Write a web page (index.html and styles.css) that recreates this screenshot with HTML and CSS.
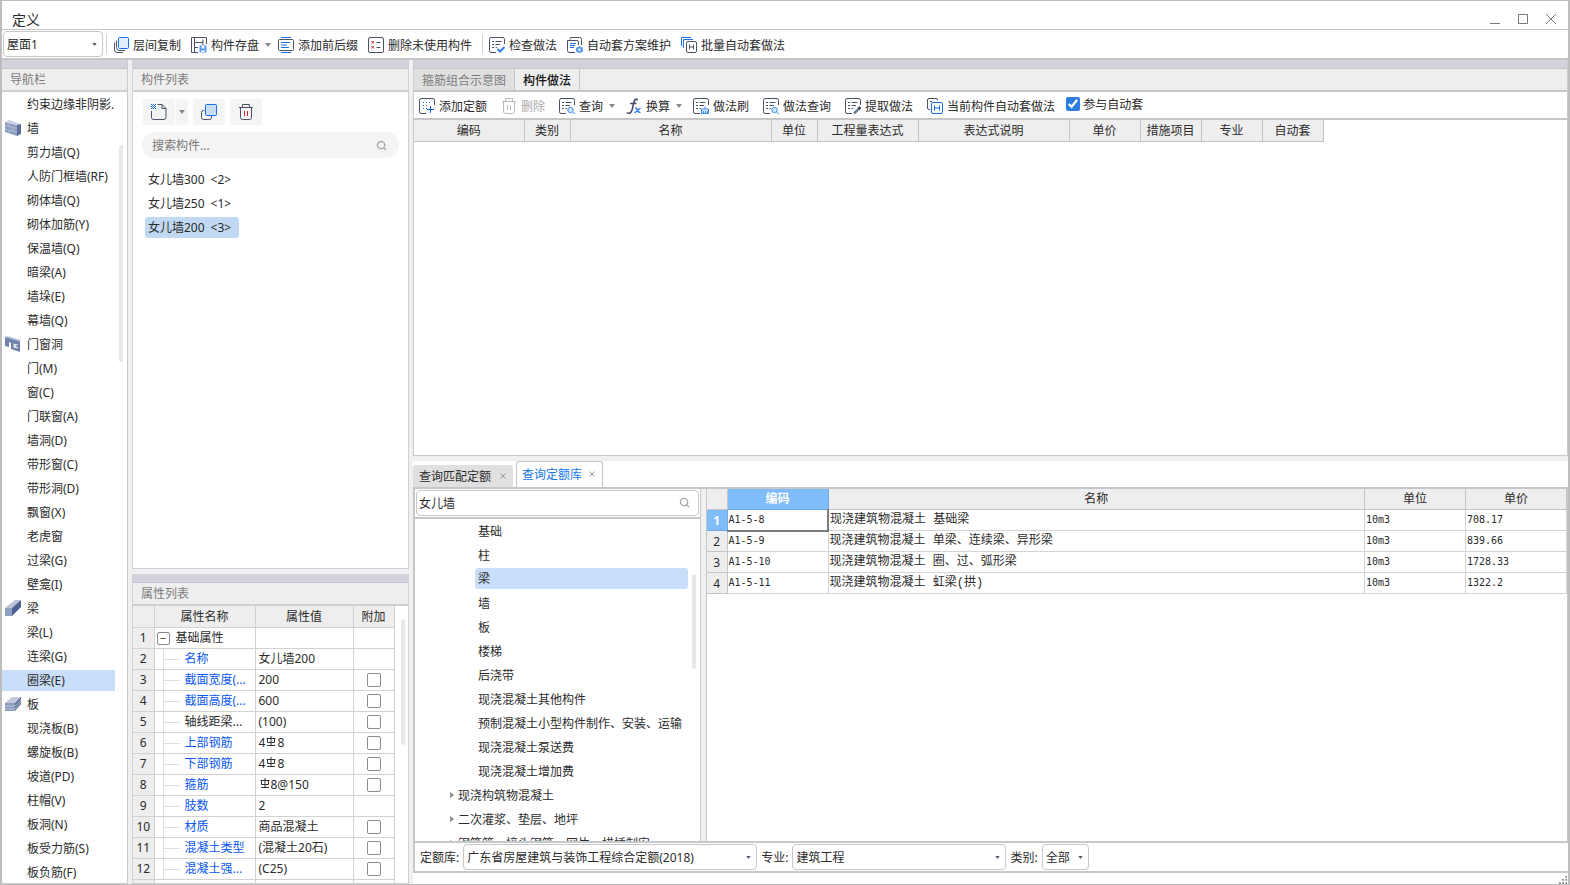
FILE: index.html
```html
<!DOCTYPE html>
<html lang="zh-CN">
<head>
<meta charset="utf-8">
<title>定义</title>
<link rel="stylesheet" href="styles.css">
</head>
<body>
<svg class="defs" aria-hidden="true">
  <defs>
    <symbol id="i-list" viewBox="0 0 16 16"><path d="M15.500 7V2.500Q15.500 .500 14 .500H2Q.500 .500 .500 2.500V13.500Q.500 15.500 2 15.500H7" class="d"/><path d="M3 4.500H5M6.500 4.500H12.500M3 7.500H5M6.500 7.500H11M3 10.500H5M6.500 10.500H8" class="d"/></symbol>
  </defs>
</svg>
<div class="window">
  <header class="titlebar">
    <h1>定义</h1>
    <div class="winbtns">
      <button aria-label="最小化"><svg width="12" height="12" viewBox="0 0 12 12"><path d="M1 10.500H11" class="g"/></svg></button>
      <button aria-label="最大化"><svg width="12" height="12" viewBox="0 0 12 12"><path d="M1.500 1.500H10.500V10.500H1.500Z" class="g"/></svg></button>
      <button aria-label="关闭"><svg width="12" height="12" viewBox="0 0 12 12"><path d="M1 1L11 11M11 1L1 11" class="g"/></svg></button>
    </div>
  </header>

  <div class="toolbar main-tools">
    <select class="floor" aria-label="楼层"><option>屋面1</option></select>
    <span class="vsep"></span>
    <button class="tool"><svg class="ic" viewBox="0 0 16 16"><path d="M3.500 3.500V10.500Q3.500 12.500 5.500 13.500H12M1.500 5.500V13Q1.500 15.500 4 15.500H10" class="d"/><rect x="5.500" y=".5" width="10" height="11" rx="1" class="bf"/></svg>层间复制</button>
    <button class="tool"><svg class="ic" viewBox="0 0 16 16"><path d="M15.500 7V.500H.500V15.500H7M3.500 .500V15.500M3.500 5.500H12V2.500M12 5.500V8M3.500 10.500H7" class="d"/><path d="M8.500 8.500H15.500V15.500H8.500Z" class="bs"/><path d="M10.500 9H13.500V11.500H10.500ZM10 13.500H14V15H10Z" class="w"/></svg>构件存盘<i class="car"></i></button>
    <button class="tool"><svg class="ic" viewBox="0 0 16 16"><path d="M3 .500H13M3 15.500H13" class="b"/><rect x=".500" y="2.500" width="15" height="11" rx="1" class="d"/><path d="M3 5.500H12M3 8H9M3 10.500H11" class="b"/></svg>添加前后缀</button>
    <button class="tool"><svg class="ic" viewBox="0 0 16 16"><rect x=".5" y=".5" width="15" height="15" rx="1.500" class="d"/><path d="M3.500 4L6 6.500M6 4L3.500 6.500M3.500 9L6 11.500M6 9L3.500 11.500" class="r"/><path d="M8.500 5.500H12.500M8.500 10.500H12.500" class="d"/></svg>删除未使用构件</button>
    <span class="vsep"></span>
    <button class="tool"><svg class="ic" viewBox="0 0 16 16"><use href="#i-list"/><path d="M8.500 12L11 14.500L15.500 10" class="b2"/></svg>检查做法</button>
    <button class="tool"><svg class="ic" viewBox="0 0 16 16"><path d="M3 2.500L3.500 .500H12.500Q14.500 .500 14.500 2.500V8M8 15.500H2Q.500 15.500 .500 13.500V3.500H10Q11.500 3.500 11.500 5V8" class="d"/><path d="M3 6.500H9M3 8.500H8M3 10.500H7" class="b"/><path d="M12.500 9L16 11V14.500L12.500 16.200L9 14.500V11Z" class="bs"/><circle cx="12.500" cy="12.700" r="1.300" class="w"/></svg>自动套方案维护</button>
    <button class="tool"><svg class="ic" viewBox="0 0 16 16"><path d="M.500 9V.500H10M2.500 11V2.500H12" class="b"/><rect x="5.500" y="4.500" width="10" height="11" rx="1.500" class="d"/><path d="M8.500 7.500V12.500M12.500 7.500V12.500M8.500 10H12.500" class="d"/></svg>批量自动套做法</button>
  </div>

  <main class="work">
    <section class="panel nav">
      <div class="grip"></div>
      <h2>导航栏</h2>
      <div class="navbody">
        <ul class="navlist">
          <li>约束边缘非阴影.</li>
          <li><svg class="nic" viewBox="0 0 16 16"><path d="M0 2L12 5V16L0 12Z" fill="#8b9dbf"/><path d="M0 2L4 0L16 4L12 5Z" fill="#c9d1e2"/><path d="M12 5L16 4V14L12 16Z" fill="#5c709b"/><path d="M0 5.500L12 8.500M0 9L12 12M4 3V6.500M8 7.500V11M4 10V13" stroke="#bcc6da" stroke-width=".8"/></svg>墙</li>
          <li>剪力墙(Q)</li><li>人防门框墙(RF)</li><li>砌体墙(Q)</li><li>砌体加筋(Y)</li><li>保温墙(Q)</li><li>暗梁(A)</li><li>墙垛(E)</li><li>幕墙(Q)</li>
          <li><svg class="nic" viewBox="0 0 16 16"><path d="M0 1L15 5V16L6 13V7L4 6V11L0 10Z" fill="#7183ac"/><path d="M0 1L2 0L16 4L15 5.500Z" fill="#b5c0d6"/><path d="M8.500 7.500L13 8.500V12.500L8.500 11.500Z" fill="#e6eaf2"/><path d="M10 9H13V12Z" fill="#8496b8"/></svg>门窗洞</li>
          <li>门(M)</li><li>窗(C)</li><li>门联窗(A)</li><li>墙洞(D)</li><li>带形窗(C)</li><li>带形洞(D)</li><li>飘窗(X)</li><li>老虎窗</li><li>过梁(G)</li><li>壁龛(I)</li>
          <li><svg class="nic" viewBox="0 0 16 16"><path d="M0 8L7 7V16H0Z" fill="#8fa0c2"/><path d="M0 8L10 0L16 0L7 8Z" fill="#b9c3d9"/><path d="M7 8L16 0V7L7 16Z" fill="#4d6190"/></svg>梁</li>
          <li>梁(L)</li><li>连梁(G)</li><li class="sel">圈梁(E)</li>
          <li><svg class="nic" viewBox="0 0 16 14"><path d="M0 6L10 6V14H0Z" fill="#8a9bbf"/><path d="M0 6L7 0H16L10 6Z" fill="#c0c9dc"/><path d="M10 6L16 0V7L10 14Z" fill="#566a98"/><path d="M0 9H10L16 3M0 12H10L16 5" stroke="#c6cfdf" fill="none" stroke-width=".8"/></svg>板</li>
          <li>现浇板(B)</li><li>螺旋板(B)</li><li>坡道(PD)</li><li>柱帽(V)</li><li>板洞(N)</li><li>板受力筋(S)</li><li>板负筋(F)</li>
        </ul>
        <span class="thumb nav-thumb"></span>
      </div>
    </section>

    <div class="midcol">
      <section class="panel complist">
        <div class="grip"></div>
        <h2>构件列表</h2>
        <div class="compbody">
          <div class="btns">
            <button class="sq new" aria-label="新建"><svg class="ic" viewBox="0 0 16 16"><path d="M.500 7V13.500Q.500 15.500 2.500 15.500H13Q15 15.500 15 13.500V4.500L11 .500H6.500M11 .500V4.500H15" class="d"/><path d="M0 0H1V1H0ZM2 0H3V1H2ZM4 0H5V1H4ZM1 1H2V2H1ZM3 1H4V2H3ZM0 2H1V3H0ZM2 2H3V3H2ZM4 2H5V3H4ZM1 3H2V4H1ZM3 3H4V4H3ZM0 4H1V5H0ZM2 4H3V5H2ZM4 4H5V5H4Z" fill="#1e6fe0"/></svg></button>
            <button class="sq drop" aria-label="新建选项"><i class="car"></i></button>
            <button class="sq" aria-label="复制"><svg class="ic" viewBox="0 0 16 16"><path d="M3.500 6.500H2.500Q.500 6.500 .500 8.500V13.500Q.500 15.500 2.500 15.500H8.500Q10.500 15.500 10.500 13.500V12" class="d"/><rect x="4.500" y=".500" width="11" height="11" rx="1" class="bf dk"/></svg></button>
            <button class="sq" aria-label="删除"><svg class="ic" viewBox="0 0 16 16"><path d="M1 3.500H15M4.500 3.500V.500H11.500V3.500M2.500 3.500V13.500Q2.500 15.500 4.500 15.500H11.500Q13.500 15.500 13.500 13.500V3.500" class="d"/><path d="M6.500 7V12M9.500 7V12" class="r"/></svg></button>
          </div>
          <label class="search"><input type="text" placeholder="搜索构件..." aria-label="搜索构件"><svg class="mag" viewBox="0 0 12 12"><circle cx="5.500" cy="5.500" r="4"/><path d="M8.500 8.500L11 11"/></svg></label>
          <ul class="comps"><li>女儿墙300&ensp;&lt;2&gt;</li><li>女儿墙250&ensp;&lt;1&gt;</li><li><span class="on">女儿墙200&ensp;&lt;3&gt;</span></li></ul>
        </div>
      </section>
      <section class="panel props">
        <div class="grip"></div>
        <h2>属性列表</h2>
        <div class="propbody">
          <table class="ptable">
            <colgroup><col class="c-n"><col class="c-k"><col class="c-v"><col class="c-c"></colgroup>
            <thead><tr><th></th><th>属性名称</th><th>属性值</th><th>附加</th></tr></thead>
            <tbody>
              <tr><th>1</th><td class="grp"><button class="fold" aria-label="折叠">−</button>基础属性</td><td></td><td></td></tr>
              <tr><th>2</th><td class="k">名称</td><td>女儿墙200</td><td></td></tr>
              <tr><th>3</th><td class="k">截面宽度(...</td><td>200</td><td class="c"><input type="checkbox" aria-label="附加 截面宽度"></td></tr>
              <tr><th>4</th><td class="k">截面高度(...</td><td>600</td><td class="c"><input type="checkbox" aria-label="附加 截面高度"></td></tr>
              <tr><th>5</th><td class="k blk">轴线距梁...</td><td>(100)</td><td class="c"><input type="checkbox" aria-label="附加 轴线距梁"></td></tr>
              <tr><th>6</th><td class="k">上部钢筋</td><td>4<svg class="bar" viewBox="0 0 10 10"><path d="M.500 2.500H9.500M1.500 2.500V6.500H8.500V2.500M5 0V9M1 9.500H9"/></svg>8</td><td class="c"><input type="checkbox" aria-label="附加 上部钢筋"></td></tr>
              <tr><th>7</th><td class="k">下部钢筋</td><td>4<svg class="bar" viewBox="0 0 10 10"><path d="M.500 2.500H9.500M1.500 2.500V6.500H8.500V2.500M5 0V9M1 9.500H9"/></svg>8</td><td class="c"><input type="checkbox" aria-label="附加 下部钢筋"></td></tr>
              <tr><th>8</th><td class="k">箍筋</td><td><svg class="bar" viewBox="0 0 10 10"><path d="M.500 2.500H9.500M1.500 2.500V6.500H8.500V2.500M5 0V9M1 9.500H9"/></svg>8@150</td><td class="c"><input type="checkbox" aria-label="附加 箍筋"></td></tr>
              <tr><th>9</th><td class="k">肢数</td><td>2</td><td></td></tr>
              <tr><th>10</th><td class="k">材质</td><td>商品混凝土</td><td class="c"><input type="checkbox" aria-label="附加 材质"></td></tr>
              <tr><th>11</th><td class="k">混凝土类型</td><td>(混凝土20石)</td><td class="c"><input type="checkbox" aria-label="附加 混凝土类型"></td></tr>
              <tr><th>12</th><td class="k">混凝土强...</td><td>(C25)</td><td class="c"><input type="checkbox" aria-label="附加 混凝土强度"></td></tr>
              <tr><th></th><td></td><td></td><td></td></tr>
            </tbody>
          </table>
          <span class="thumb prop-thumb"></span>
        </div>
      </section>
    </div>

    <div class="rightcol">
      <section class="panel method">
        <div class="grip"></div>
        <div class="tabs"><button class="tab off">箍筋组合示意图</button><button class="tab on">构件做法</button></div>
        <div class="toolbar sub-tools">
          <button class="tool"><svg class="ic" viewBox="0 0 16 16"><path d="M15.500 7V2.500Q15.500 .500 14 .500H2Q.500 .500 .500 2.500V13.500Q.500 15.500 2 15.500H7" class="d"/><path d="M4 4.500H12M4 7.500H10M4 10.500H8" class="b" stroke-dasharray="1 2"/><path d="M11.500 8V15M8 11.500H15" class="b"/></svg>添加定额</button>
          <button class="tool" disabled><svg class="ic" viewBox="0 0 16 16"><path d="M1 3.500H15M4.500 3.500V.500H11.500V3.500M2.500 3.500V13.500Q2.500 15.500 4.500 15.500H11.500Q13.500 15.500 13.500 13.500V3.500M6.500 7V12M9.500 7V12" class="x"/></svg>删除</button>
          <button class="tool"><svg class="ic" viewBox="0 0 16 16"><use href="#i-list"/><circle cx="11.500" cy="12" r="2.700" class="bq"/><path d="M13.500 14L16 16" class="bq"/></svg>查询<i class="car"></i></button>
          <button class="tool"><svg class="ic" viewBox="0 0 16 16"><path d="M11.500 2.500Q11 .500 9.300 1.500Q8 2.500 7 8Q6 14 4 15Q2 15.800 1 14.500M4 5.500H10.500" class="f"/><path d="M9 10Q10.500 9.500 11.300 12T14.500 14.500M14.500 10L8.500 15" class="bx"/></svg>换算<i class="car"></i></button>
          <button class="tool"><svg class="ic" viewBox="0 0 16 16"><use href="#i-list"/><path d="M8.500 11H15.500V15.500H8.500ZM12 8.500V11M10.500 13V16M12.500 13V16M14.500 13V16" class="bq"/></svg>做法刷</button>
          <button class="tool"><svg class="ic" viewBox="0 0 16 16"><use href="#i-list"/><circle cx="11.500" cy="12" r="2.700" class="bq"/><path d="M13.500 14L16 16" class="bq"/></svg>做法查询</button>
          <button class="tool"><svg class="ic" viewBox="0 0 16 16"><use href="#i-list"/><path d="M9 15.500L14.500 10" stroke="#6f7f9c" stroke-width="2.500"/><path d="M13.500 11L15.500 9" stroke="#3b4560" stroke-width="2.500"/></svg>提取做法</button>
          <button class="tool"><svg class="ic" viewBox="0 0 16 16"><path d="M3 11.500H2Q.500 11.500 .500 10V2Q.500 .500 2 .500H9Q10.500 .500 10.500 2V2.500M3 3.500H5" class="d"/><rect x="4.500" y="4.500" width="11" height="11" rx="1.500" class="b"/><path d="M7.500 7.500V12.500M12.500 7.500V12.500M7.500 10H12.500" class="b"/></svg>当前构件自动套做法</button>
          <label class="auto"><input type="checkbox" checked>参与自动套</label>
        </div>
        <table class="mtable">
          <colgroup><col class="w110"><col class="w46"><col class="w201"><col class="w46"><col class="w101"><col class="w151"><col class="w71"><col class="w61"><col class="w61"><col class="w61"></colgroup>
          <thead><tr><th>编码</th><th>类别</th><th>名称</th><th>单位</th><th>工程量表达式</th><th>表达式说明</th><th>单价</th><th>措施项目</th><th>专业</th><th>自动套</th></tr></thead>
        </table>
      </section>

      <section class="query">
        <div class="qtabs">
          <button class="qtab">查询匹配定额<svg class="cx" viewBox="0 0 8 8"><path d="M1.500 1.500L6.500 6.500M6.500 1.500L1.500 6.500"/></svg></button>
          <button class="qtab on">查询定额库<svg class="cx" viewBox="0 0 8 8"><path d="M1.500 1.500L6.500 6.500M6.500 1.500L1.500 6.500"/></svg></button>
        </div>
        <div class="qmain">
          <div class="qtree">
            <label class="qsearch"><input type="text" value="女儿墙" aria-label="查询定额"><svg class="mag" viewBox="0 0 12 12"><circle cx="5.500" cy="5.500" r="4"/><path d="M8.500 8.500L11 11"/></svg></label>
            <div class="treebody">
              <ul class="tree">
                <li>基础</li><li>柱</li><li><span class="sel">梁</span></li><li>墙</li><li>板</li><li>楼梯</li><li>后浇带</li><li>现浇混凝土其他构件</li><li>预制混凝土小型构件制作、安装、运输</li><li>现浇混凝土泵送费</li><li>现浇混凝土增加费</li>
                <li class="top"><i class="tri"></i>现浇构筑物混凝土</li><li class="top"><i class="tri"></i>二次灌浆、垫层、地坪</li><li class="top"><i class="tri"></i>钢筋笼、接头钢筋、网片、措插制安</li>
              </ul>
              <span class="thumb tree-thumb"></span>
            </div>
          </div>
          <div class="qresult">
            <table class="qtable">
              <colgroup><col class="q-n"><col class="q-c"><col><col class="q-c"><col class="q-c"></colgroup>
              <thead><tr><th></th><th class="on">编码</th><th>名称</th><th>单位</th><th>单价</th></tr></thead>
              <tbody>
                <tr><th class="on">1</th><td class="cur">A1-5-8</td><td class="nm">现浇建筑物混凝土 基础梁</td><td>10m3</td><td>708.17</td></tr>
                <tr><th>2</th><td>A1-5-9</td><td class="nm">现浇建筑物混凝土 单梁、连续梁、异形梁</td><td>10m3</td><td>839.66</td></tr>
                <tr><th>3</th><td>A1-5-10</td><td class="nm">现浇建筑物混凝土 圈、过、弧形梁</td><td>10m3</td><td>1728.33</td></tr>
                <tr><th>4</th><td>A1-5-11</td><td class="nm">现浇建筑物混凝土 虹梁(拱)</td><td>10m3</td><td>1322.2</td></tr>
              </tbody>
            </table>
          </div>
        </div>
        <div class="qfoot">
          <label for="lib">定额库:</label><select id="lib" class="s-lib"><option>广东省房屋建筑与装饰工程综合定额(2018)</option></select>
          <label for="pro">专业:</label><select id="pro" class="s-pro"><option>建筑工程</option></select>
          <label for="cat">类别:</label><select id="cat" class="s-cat"><option>全部</option></select>
        </div>
      </section>
      <div class="status"><svg class="size" viewBox="0 0 10 10"><path d="M8 1V3M8 4.500V6.500M4.500 4.500V6.500M8 8V10M4.500 8V10M1 8V10"/></svg></div>
    </div>
  </main>
</div>
</body>
</html>
```
FILE: styles.css
```css
* { box-sizing: border-box; }
body, h1, h2, ul { margin: 0; padding: 0; }
ul { list-style: none; }
body, button, input, select {
  font-family: "Noto Sans", "Noto Sans CJK SC", sans-serif;
  font-size: 12px;
  color: #2b2b2b;
}
button { border: 0; background: none; padding: 0; margin: 0; white-space: nowrap; }
svg { display: block; flex: none; }
.defs { position: absolute; width: 0; height: 0; }

.window {
  height: 100vh;
  display: flex;
  flex-direction: column;
  border: 1px solid #bdbdbd;
  border-left-width: 2px;
  border-right-width: 2px;
  background: #fff;
  overflow: hidden;
}
.titlebar { height: 29px; flex: none; display: flex; justify-content: space-between; border-bottom: 1px solid #c4c4c4; padding: 0 11px 0 10px; }
.titlebar h1 { font-size: 14px; font-weight: 400; line-height: 20px; padding-top: 9px; }
.winbtns { display: flex; gap: 16px; padding-top: 12px; }
.winbtns button { width: 12px; height: 12px; }

.d, .b, .b2, .bx, .bq, .r, .g, .x, .f { fill: none; stroke-width: 1; }
.d { stroke: #4a5265; }
.b { stroke: #1a6fe8; }
.b2 { stroke-width: 2; stroke: #2f80ea; }
.bx { stroke-width: 1.5; stroke: #2f80ea; }
.bq { stroke: #3f8cf0; fill: #d5e7fd; }
.bf { fill: #e3effd; stroke: #1a6fe8; }
.dk { fill: #c9dcf6; }
.bs { fill: #5b9bee; }
.w { fill: #eaf3ff; }
.r { stroke: #e0222c; }
.g { stroke: #777; }
.x { stroke: #bbb; }
.f { stroke: #46506a; stroke-width: 1.6; }
.ic { width: 16px; height: 16px; overflow: visible; }

.toolbar { display: flex; align-items: center; flex: none; }
.tool { display: flex; align-items: center; gap: 4px; height: 26px; }
.tool:disabled { color: #aaa; }
.car { width: 0; height: 0; border: 3px solid transparent; border-top: 4px solid #8a8a8a; border-bottom: 0; }
.tool .car { margin-left: 2px; margin-right: -3px; }
.main-tools { height: 30px; border-bottom: 2px solid #c4c6cb; gap: 10px; }
.main-tools .tool { padding-top: 2px; }
.vsep { width: 1px; height: 20px; margin-right: -4px; background: #d4d4d4; }

select {
  appearance: none;
  height: 26px;
  border: 1px solid #c8c8c8;
  border-radius: 4px;
  padding: 0 14px 0 3px;
  background: #fff url("data:image/svg+xml,%3Csvg xmlns='http://www.w3.org/2000/svg' viewBox='0 0 6 4'%3E%3Cpath d='M0 0H6L3 4Z' fill='%23555d70'/%3E%3C/svg%3E") no-repeat right 5px center / 5px 3px;
}
.floor { width: 100px; margin-left: 1px; margin-right: -7px; }

.work { flex: 1; min-height: 0; display: flex; gap: 4px; background: #f0f0f0; }
.panel { display: flex; flex-direction: column; background: #fff; border: 1px solid #c9cbd0; border-top: 0; min-height: 0; }
.grip { height: 9px; flex: none; background: #d3d4db; border-bottom: 1px solid #c4c6cb; }
.panel h2 { height: 23px; flex: none; background: #eee; border-bottom: 2px solid #cdcfd3; color: #7c7c7c; font-size: 12px; font-weight: 400; line-height: 21px; padding-left: 8px; }
.nav { width: 126px; flex: none; border-left: 0; }
.navbody { position: relative; flex: 1; min-height: 0; overflow: hidden; }
.navlist li { position: relative; height: 24px; line-height: 20px; padding: 3px 0 1px 25px; white-space: nowrap; }
.navlist .sel { background: linear-gradient(#c9dff9, #c9dff9) no-repeat 0 2px / 113px 21px; }
.nic { position: absolute; left: 3px; top: 4px; width: 16px; height: 16px; }
.thumb { position: absolute; width: 4px; border-radius: 2px; background: #e8e8e8; }
.nav-thumb { right: 4px; top: 53px; height: 217px; }

.midcol { width: 277px; flex: none; display: flex; flex-direction: column; gap: 5px; }
.complist { flex: 510 1 0; }
.props { flex: 310 1 0; }
.midcol .panel { border-color: #cfd1d5; }
.compbody { padding: 7px 9px; }
.btns { display: flex; gap: 5px; padding-left: 1px; }
.sq { width: 32px; height: 26px; border-radius: 3px; background: #f4f4f4; display: flex; align-items: center; justify-content: center; }
.sq.drop { width: 12px; margin-left: -4px; }
.search { display: flex; align-items: center; height: 26px; margin-top: 7px; border-radius: 13px; background: #f4f4f4; padding: 0 12px 0 10px; }
.search input, .qsearch input { flex: 1; min-width: 0; border: 0; background: none; padding: 0; outline: 0; }
.search input::placeholder { color: #777; }
.mag { width: 11px; height: 11px; fill: none; stroke: #a6a6a6; stroke-width: 1.4; }
.comps { padding: 9px 0 0 3px; }
.comps li { height: 24px; display: flex; align-items: center; padding-left: 3px; }
.comps .on { height: 21px; line-height: 21px; padding: 0 8px 0 3px; margin-left: -3px; border-radius: 3px; background: #c1d9f2; }

table { border-collapse: collapse; table-layout: fixed; }
th { font-weight: 400; }
.propbody { position: relative; flex: 1; min-height: 0; overflow: hidden; }
.ptable { width: 261px; }
.ptable th, .ptable td { height: 21px; line-height: 18px; padding: 1px 0 0 3px; border-right: 1px solid #d2d2d2; border-bottom: 1px solid #d2d2d2; white-space: nowrap; overflow: hidden; }
.ptable th { background: #eee; padding: 1px 0 0; }
.c-n { width: 21px; } .c-k { width: 101px; } .c-v { width: 98px; } .c-c { width: 41px; }
.ptable .k { color: #0b57f0; padding-left: 30px; background: linear-gradient(#dedede, #dedede) no-repeat 8px 10px / 17px 1px, linear-gradient(#dedede, #dedede) no-repeat 8px 0 / 1px 100%; }
.ptable .blk { color: #2b2b2b; }
.ptable .grp { padding-left: 2px; }
.fold { display: inline-block; width: 13px; height: 13px; border: 1px solid #888; border-radius: 2px; line-height: 10px; font-size: 11px; margin-right: 6px; background: #fff; }
.bar { display: inline-block; width: 10px; height: 10px; margin: 0 1px; vertical-align: 1px; fill: none; stroke: #333; }
.ptable .c { padding: 0; text-align: center; }
.ptable input { appearance: none; display: block; width: 14px; height: 14px; margin: 0 auto; border: 1px solid #8c8c8c; border-radius: 2px; background: #fff; }
.prop-thumb { right: 3px; top: 13px; height: 126px; }

.rightcol { flex: 1; min-width: 0; display: flex; flex-direction: column; background: #fff; }
.method { flex: 397 1 0; }
.tabs { display: flex; height: 23px; flex: none; background: #eee; border-bottom: 2px solid #c4c6cb; }
.tab { padding: 0 8px; border-right: 1px solid #c4c6cb; }
.tab.off { background: #e0e0e0; color: #7c7c7c; }
.tab.on { color: #111; font-weight: 500; }
.sub-tools { height: 28px; border-bottom: 2px solid #c6c6c6; padding-left: 5px; gap: 14px; }
.sub-tools .tool { padding-top: 2px; }
.auto { display: flex; align-items: center; gap: 3px; margin-left: -3px; padding-bottom: 2px; white-space: nowrap; }
.auto input { width: 14px; height: 14px; margin: 0; accent-color: #2b7de0; }
.mtable { width: 909px; }
.mtable th { height: 21px; padding: 1px 0 0; line-height: 18px; background: #eee; border-right: 1px solid #c4c4c4; border-bottom: 1px solid #c4c4c4; white-space: nowrap; }
.w110 { width: 110px; } .w46 { width: 46px; } .w201 { width: 201px; } .w101 { width: 101px; } .w151 { width: 151px; } .w71 { width: 71px; } .w61 { width: 61px; }

.query { flex: 415 1 0; min-height: 0; display: flex; flex-direction: column; border-top: 5px solid #f0f0f0; }
.qtabs { height: 28px; flex: none; display: flex; align-items: flex-end; gap: 3px; border-bottom: 2px solid #c4c6cb; }
.qtab { display: flex; align-items: center; gap: 8px; height: 22px; padding: 0 6px; background: #e0e0e0; border-radius: 3px 3px 0 0; }
.qtab.on { height: 26px; background: #fff; color: #1677e6; border: 1px solid #c4c6cb; border-bottom: 0; padding: 0 6px 0 5px; gap: 6px; }
.cx { width: 8px; height: 8px; stroke: #999; }
.qmain { flex: 1; min-height: 0; display: flex; gap: 5px; background: #f0f0f0; border-right: 1px solid #c6c6c6; border-left: 2px solid #c4c6cb; }
.qtree { width: 286px; flex: none; display: flex; flex-direction: column; background: #fff; border-right: 1px solid #c6c6c6; }
.qsearch { display: flex; align-items: center; height: 26px; flex: none; margin: 1px; border: 1px solid #c8c8c8; border-radius: 4px; padding: 0 8px 0 2px; }
.treebody { position: relative; flex: 1; min-height: 0; overflow: hidden; border-top: 2px solid #c6c6c6; }
.tree li { display: flex; align-items: center; height: 24px; padding-left: 63px; padding-right: 12px; white-space: nowrap; }
.tree .sel { flex: 1; height: 21px; line-height: 21px; padding-left: 3px; margin-left: -3px; border-radius: 3px; background: #c9dff9; }
.tree .top { padding-left: 35px; gap: 4px; }
.tri { border: 3px solid transparent; border-left: 4px solid #8a8a8a; border-right: 0; }
.tree-thumb { right: 4px; top: 55px; height: 95px; }
.qresult { flex: 1; min-width: 0; background: #fff; border-left: 1px solid #c6c6c6; overflow: hidden; }
.qtable { width: 100%; }
.q-n { width: 20px; } .q-c { width: 101px; }
.qtable th { height: 21px; padding: 1px 0 0; line-height: 18px; background: #eee; border-right: 1px solid #c6c6c6; border-bottom: 1px solid #c6c6c6; }
.qtable td { height: 21px; line-height: 16px; padding: 0 0 0 1px; border-right: 1px solid #d4d4d4; border-bottom: 1px solid #d4d4d4; font-family: "DejaVu Sans Mono", monospace; font-size: 10px; white-space: nowrap; }
.qtable .nm { font-family: "Liberation Mono", "Noto Sans CJK SC", monospace; font-size: 12px; }
.qtable .on { background: #80bbfa; color: #fff; font-weight: 700; border-color: #6aa9ea; }
.qtable .cur { border-bottom: 2px solid #7d7d7d; border-right: 2px solid #7d7d7d; }
.qfoot { height: 32px; flex: none; display: flex; align-items: center; gap: 4px; padding-left: 5px; border: 2px solid #c4c9ce; border-right: 0; white-space: nowrap; }
.s-lib { width: 294px; } .s-pro { width: 214px; } .s-cat { width: 47px; }
.status { height: 11px; flex: none; display: flex; justify-content: flex-end; align-items: flex-end; }
.size { width: 9px; height: 9px; stroke: #888; stroke-width: 2; }
```
